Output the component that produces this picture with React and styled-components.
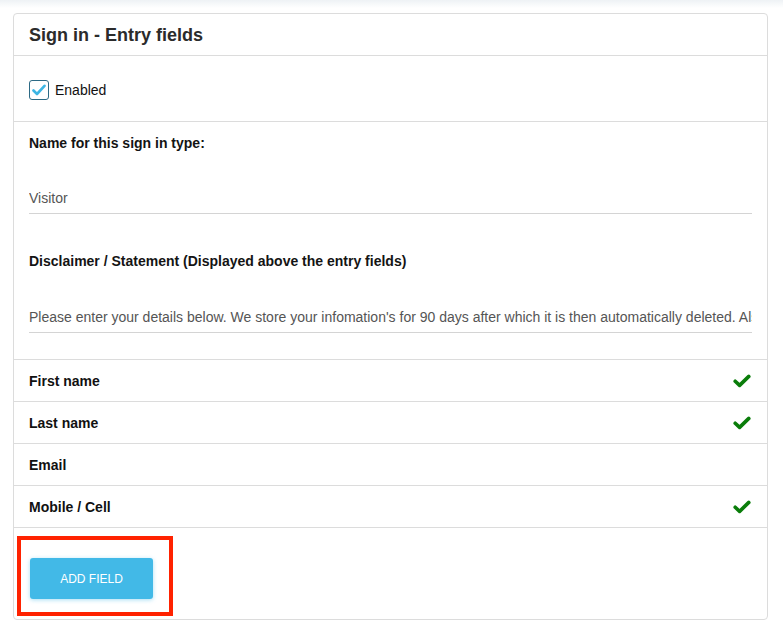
import React from "react";
import styled, { createGlobalStyle } from "styled-components";

const Global = createGlobalStyle`
  html, body { margin: 0; padding: 0; background: #fff; }
  body {
    font-family: "Liberation Sans", Arial, sans-serif;
    background: linear-gradient(to bottom, #eef2f5 0px, #ffffff 8px) no-repeat;
  }
  * { box-sizing: border-box; }
`;

const Page = styled.div`
  padding: 13px 15px 12px 13px;
`;

const Panel = styled.div`
  border: 1px solid #dcdcdc;
  border-radius: 4px;
  background: #fff;
`;

const Header = styled.div`
  height: 42px;
  display: flex;
  align-items: center;
  padding: 2px 15px 0;
  border-bottom: 1px solid #dcdcdc;
`;

const Title = styled.h3`
  margin: 0;
  font-size: 18px;
  font-weight: 700;
  color: #2b2b2b;
`;

const EnableRow = styled.div`
  height: 66px;
  display: flex;
  align-items: center;
  gap: 6px;
  padding: 2px 15px 0;
  border-bottom: 1px solid #dcdcdc;
  font-size: 14px;
  color: #111;
`;

const Box = styled.span`
  width: 20px;
  height: 20px;
  border: 1.5px solid #2c6a85;
  border-radius: 3px;
  display: inline-flex;
  align-items: center;
  justify-content: center;
`;

const FormSection = styled.div`
  padding: 11px 15px 26px;
`;

const Group = styled.div`
  & + & { margin-top: 37px; }
`;

const Label = styled.div`
  font-size: 14px;
  font-weight: 700;
  line-height: 20px;
  color: #141414;
  margin-bottom: ${(p) => p.$gap}px;
`;

const Input = styled.input`
  display: block;
  width: 100%;
  height: 31px;
  border: none;
  border-bottom: 1px solid #d4d4d4;
  padding: 0;
  font-family: inherit;
  font-size: 14px;
  color: #555;
  background: transparent;
  outline: none;
`;

const Row = styled.div`
  height: 42px;
  display: flex;
  align-items: center;
  justify-content: space-between;
  padding: 0 16px 0 15px;
  border-top: 1px solid #dcdcdc;
  font-size: 14px;
  font-weight: 700;
  color: #111;
`;

const Footer = styled.div`
  position: relative;
  border-top: 1px solid #dcdcdc;
  padding: 30px 16px 20px;
`;

const AddButton = styled.button`
  display: block;
  width: 123px;
  height: 41px;
  border: none;
  border-radius: 3px;
  background: #42b9e7;
  color: #fff;
  font-family: inherit;
  font-size: 12px;
  box-shadow: 0 1px 4px rgba(66, 185, 231, 0.45);
  cursor: pointer;
`;

const Highlight = styled.div`
  position: absolute;
  left: 3px;
  top: 8px;
  width: 156px;
  height: 80px;
  border: 4px solid #ff2200;
  pointer-events: none;
`;

const BlueCheck = () => (
  <svg width="14" height="12" viewBox="0 0 14 12">
    <path d="M1.5 6.5 L5 10 L12.5 1.8" fill="none" stroke="#3db6e4" strokeWidth="2.6" strokeLinecap="round" strokeLinejoin="round" />
  </svg>
);

const GreenCheck = () => (
  <svg width="18" height="14" viewBox="0 0 18 14">
    <path d="M2.2 7.2 L6.6 11.4 L15.8 2.4" fill="none" stroke="#0a7d0a" strokeWidth="3.6" strokeLinecap="round" strokeLinejoin="round" />
  </svg>
);

const fields = [
  { name: "First name", required: true },
  { name: "Last name", required: true },
  { name: "Email", required: false },
  { name: "Mobile / Cell", required: true },
];

export default function App() {
  return (
    <>
      <Global />
      <Page>
        <Panel>
          <Header>
            <Title>Sign in - Entry fields</Title>
          </Header>
          <EnableRow>
            <Box><BlueCheck /></Box>
            Enabled
          </EnableRow>
          <FormSection>
            <Group>
              <Label $gap={30}>Name for this sign in type:</Label>
              <Input readOnly value="Visitor" />
            </Group>
            <Group>
              <Label $gap={31}>Disclaimer / Statement (Displayed above the entry fields)</Label>
              <Input
                readOnly
                value="Please enter your details below. We store your infomation's for 90 days after which it is then automatically deleted. Also by signing in you agree to our terms."
              />
            </Group>
          </FormSection>
          {fields.map((f) => (
            <Row key={f.name}>
              <span>{f.name}</span>
              {f.required && <GreenCheck />}
            </Row>
          ))}
          <Footer>
            <AddButton>ADD FIELD</AddButton>
            <Highlight />
          </Footer>
        </Panel>
      </Page>
    </>
  );
}
